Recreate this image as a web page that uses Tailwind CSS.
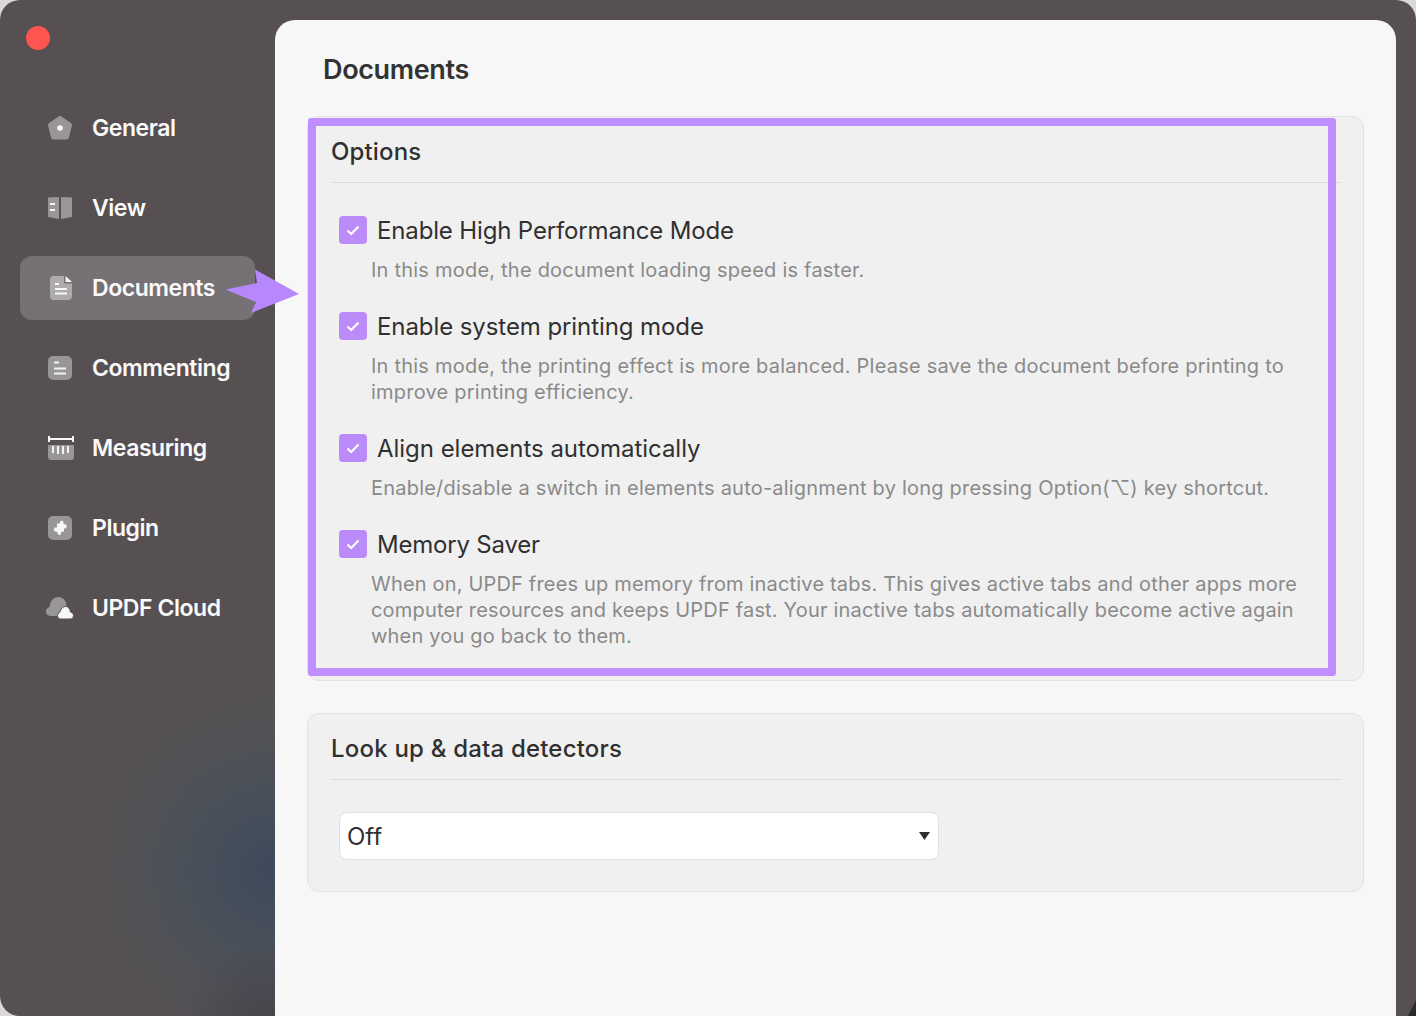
<!DOCTYPE html>
<html lang="en">
<head>
  <meta charset="UTF-8" />
  <title>UPDF Preferences - Documents</title>
  <script src="https://cdn.jsdelivr.net/npm/@tailwindcss/browser@4"></script>
</head>
<body class="bg-[#d9d9d9] font-['Inter',sans-serif] overflow-hidden">
  <div class="relative w-[1416px] h-[1016px] flex overflow-hidden rounded-t-[20px] rounded-bl-[20px] bg-[#575053] bg-[radial-gradient(circle_at_275px_1040px,#45404a_0,#45404a00_100px),radial-gradient(circle_at_272px_870px,#3d4a5c_0,#4a5059_85px,#535255_150px,#575053_215px)]">

    <!-- sidebar -->
    <aside class="w-[275px] shrink-0 px-5">
      <div class="w-6 h-6 ml-1.5 mt-[26px] rounded-full bg-[#fd5550]"></div>
      <nav class="mt-[46px] flex flex-col gap-4 text-[23px] font-semibold text-[#fafafa] tracking-[-0.45px]">
        <a class="h-16 flex items-center pl-[28px] gap-[20px]">
          <svg class="w-6 h-6" viewBox="0 0 24 24"><path d="M12 2.500 21.500 9 18.500 21 5.500 21 2.500 9Z" fill="#99969a" stroke="#99969a" stroke-width="5" stroke-linejoin="round"/><circle cx="12" cy="12" r="2.800" fill="#f7f7f7"/></svg>
          General
        </a>
        <a class="h-16 flex items-center pl-[28px] gap-[20px]">
          <svg class="w-6 h-6" viewBox="0 0 24 24"><path d="M0 1.500 11 1V23L0 21Z" fill="#99969a"/><path d="M13 1 24 1.500V21L13 23Z" fill="#99969a"/><path d="M2 8H7M2 14H7" stroke="#f7f7f7" stroke-width="2"/></svg>
          View
        </a>
        <a class="h-16 flex items-center pl-[30px] gap-[20px] rounded-xl bg-[#767175]">
          <svg class="w-[22px] h-6" viewBox="0 0 22 24"><path d="M4 0H14V7.500H22V20Q22 24 18 24H4Q0 24 0 20V4Q0 0 4 0Z" fill="#aeabae"/><path d="M15.500 0 22 6H15.500Z" fill="#f7f7f7"/><path d="M5 8H9M5 13H17M5 17.500H17" stroke="#f7f7f7" stroke-width="2"/></svg>
          Documents
        </a>
        <a class="h-16 flex items-center pl-[28px] gap-[20px]">
          <svg class="w-6 h-6" viewBox="0 0 24 24"><rect width="24" height="24" rx="5" fill="#99969a"/><path d="M6 6.500H11M6 12.500H18M6 17.500H18" stroke="#f2f2f2" stroke-width="2"/></svg>
          Commenting
        </a>
        <a class="h-16 flex items-center pl-[28px] gap-[18px]">
          <svg class="w-[26px] h-6" viewBox="0 0 26 24"><path d="M0 3H26M1 0V6M25 0V6" stroke="#f7f7f7" stroke-width="2"/><path d="M0 9H26V21Q26 24 23 24H3Q0 24 0 21Z" fill="#99969a"/><path d="M5 10V17M10 10V18M15 10V18M20 10V17" stroke="#f2f2f2" stroke-width="2"/></svg>
          Measuring
        </a>
        <a class="h-16 flex items-center pl-[28px] gap-[20px]">
          <svg class="w-6 h-6" viewBox="0 0 24 24"><rect width="24" height="24" rx="5" fill="#99969a"/><path d="M9 7.500H12V5.500Q14 4 15.500 6V8L18 8.500Q19.500 10.500 17.500 12.500H16V15.500L13 16V18.500Q10.500 19.500 9.500 17.500V16L7 15.500Q5 13.500 6.500 11.500L9 11.500Z" fill="#f7f7f7"/></svg>
          Plugin
        </a>
        <a class="h-16 flex items-center pl-[26px] gap-[18px]">
          <svg class="w-[28px] h-6" viewBox="0 0 28 24"><path d="M4 20Q0 19 0 15.500 0 12 3.500 11 5 1 12 1 19 1 20.500 9L16 20Z" fill="#99969a"/><path d="M14 23Q11.500 23 11.500 19.500 11.500 16.500 14 16 15.500 10.500 19.500 10.500 23.500 10.500 24.500 16 27.500 16.500 27.500 19.500 27.500 23 25 23Z" fill="#f7f7f7" stroke="#575053" stroke-width="1"/></svg>
          UPDF Cloud
        </a>
      </nav>
    </aside>

    <!-- main panel -->
    <main class="w-[1121px] mt-5 rounded-t-[20px] bg-[#f7f7f7] pl-8 pr-8 text-[#303030]">
      <h1 class="ml-4 mt-8 text-[27px] leading-9 font-semibold tracking-[-0.35px] text-[#333333]">Documents</h1>

      <section class="mt-7 rounded-xl border border-[#e2e2e2] bg-[#f0f0f0] pl-[23px] pr-[21px] h-[565px]">
        <h2 class="h-[65px] pt-5 text-[24px] leading-[29px] font-medium tracking-[0.15px]">Options</h2>
        <div class="border-t border-[#dcdcdc] pt-[33px] pl-2">

          <div class="h-[96px]">
            <label class="flex items-center h-7 gap-[10px] text-[24px] tracking-[-0.15px]">
              <span class="w-7 h-7 flex items-center justify-center rounded bg-[#bb8bfa]">
                <svg class="w-4 h-4" viewBox="0 0 16 16" fill="none"><path d="M2.500 8.500 6.200 12 13.500 4.500" stroke="#fff" stroke-width="2"/></svg>
              </span>
              <span class="mt-0.5">Enable High Performance Mode</span>
            </label>
            <p class="mt-[13px] ml-8 text-[20px] leading-[26px] tracking-[0.22px] text-[#8a8a8a]">In this mode, the document loading speed is faster.</p>
          </div>

          <div class="h-[122px]">
            <label class="flex items-center h-7 gap-[10px] text-[24px] tracking-[-0.08px]">
              <span class="w-7 h-7 flex items-center justify-center rounded bg-[#bb8bfa]">
                <svg class="w-4 h-4" viewBox="0 0 16 16" fill="none"><path d="M2.500 8.500 6.200 12 13.500 4.500" stroke="#fff" stroke-width="2"/></svg>
              </span>
              <span class="mt-0.5">Enable system printing mode</span>
            </label>
            <p class="mt-[13px] ml-8 text-[20px] leading-[26px] tracking-[0.22px] text-[#8a8a8a] whitespace-nowrap">In this mode, the printing effect is more balanced. Please save the document before printing to<br />improve printing efficiency.</p>
          </div>

          <div class="h-[96px]">
            <label class="flex items-center h-7 gap-[10px] text-[24px] tracking-[-0.03px]">
              <span class="w-7 h-7 flex items-center justify-center rounded bg-[#bb8bfa]">
                <svg class="w-4 h-4" viewBox="0 0 16 16" fill="none"><path d="M2.500 8.500 6.200 12 13.500 4.500" stroke="#fff" stroke-width="2"/></svg>
              </span>
              <span class="mt-0.5">Align elements automatically</span>
            </label>
            <p class="mt-[13px] ml-8 text-[20px] leading-[26px] tracking-[0.21px] text-[#8a8a8a] whitespace-nowrap">Enable/disable a switch in elements auto-alignment by long pressing Option(⌥) key shortcut.</p>
          </div>

          <div>
            <label class="flex items-center h-7 gap-[10px] text-[24px] tracking-[-0.2px]">
              <span class="w-7 h-7 flex items-center justify-center rounded bg-[#bb8bfa]">
                <svg class="w-4 h-4" viewBox="0 0 16 16" fill="none"><path d="M2.500 8.500 6.200 12 13.500 4.500" stroke="#fff" stroke-width="2"/></svg>
              </span>
              <span class="mt-0.5">Memory Saver</span>
            </label>
            <p class="mt-[13px] ml-8 text-[20px] leading-[26px] tracking-[0.18px] text-[#8a8a8a] whitespace-nowrap">When on, UPDF frees up memory from inactive tabs. This gives active tabs and other apps more<br />computer resources and keeps UPDF fast. Your inactive tabs automatically become active again<br />when you go back to them.</p>
          </div>
        </div>
      </section>

      <section class="mt-8 rounded-xl border border-[#e2e2e2] bg-[#f0f0f0] pl-[23px] pr-[21px] h-[179px]">
        <h2 class="h-[65px] pt-[20px] text-[24px] leading-[29px] font-medium tracking-[0.2px]">Look up &amp; data detectors</h2>
        <div class="border-t border-[#dcdcdc] pt-8 pl-2">
          <div class="w-[600px] h-12 flex items-center justify-between pl-[7px] pr-2 rounded-lg border border-[#e0e0e0] bg-white text-[24px]">
            <span class="mt-0.5">Off</span>
            <svg class="w-[11px] h-2" viewBox="0 0 11 8"><path d="M0 0H11L5.500 8Z" fill="#2e2e2e"/></svg>
          </div>
        </div>
      </section>
    </main>

    <!-- annotation overlays -->
    <div class="absolute left-[308px] top-[118px] w-[1028px] h-[558px] rounded-[3px] border-8 border-[#c08fff]"></div>
    <svg class="absolute left-[225px] top-[268px] w-[76px] h-[46px]" viewBox="0 0 76 46"><path d="M0.500 21.500 32 15 30 1.500 74 26 26 45 31 34Z" fill="#b788fb"/></svg>
    <svg class="absolute right-0 bottom-0 w-2 h-4" viewBox="0 0 8 16"><path d="M8 0V16H0Z" fill="#2c2a2d"/></svg>
  </div>
</body>
</html>
